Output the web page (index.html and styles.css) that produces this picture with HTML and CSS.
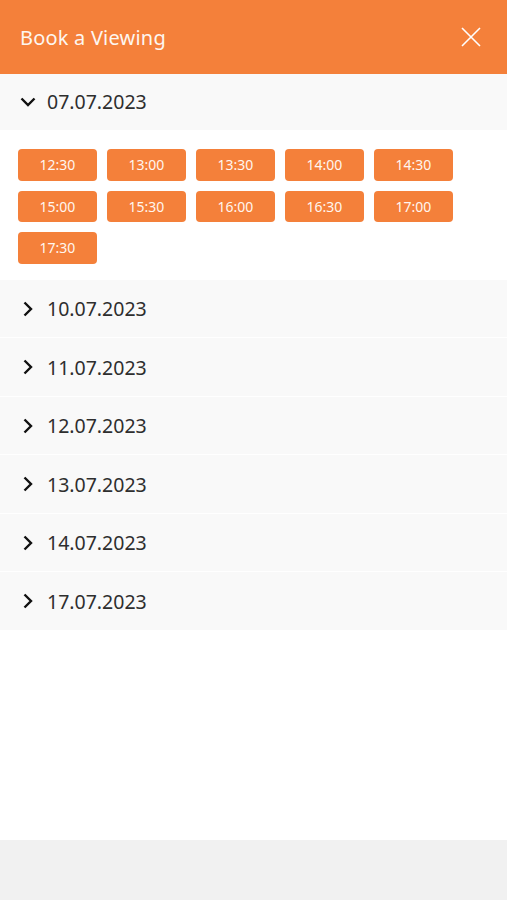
FILE: index.html
```html
<!DOCTYPE html>
<html lang="en">
<head>
<meta charset="utf-8">
<title>Book a Viewing</title>
<link rel="stylesheet" href="styles.css">
</head>
<body>
<div class="sheet">
  <header class="top">
    <h1 class="title">Book a Viewing</h1>
    <button class="close" aria-label="Close">
      <svg width="20" height="20" viewBox="0 0 20 20"><path d="M1 1 L19 19 M19 1 L1 19" stroke="#fff" stroke-width="1.6" fill="none"/></svg>
    </button>
  </header>
  <main class="list">
    <section class="day open">
      <div class="day-head">
        <svg class="chev" width="16" height="16" viewBox="0 0 16 16"><path d="M1.5 4.5 L8 11 L14.5 4.5" stroke="#111" stroke-width="2.4" fill="none"/></svg>
        <span class="date">07.07.2023</span>
      </div>
      <div class="slots">
        <button class="slot">12:30</button>
        <button class="slot">13:00</button>
        <button class="slot">13:30</button>
        <button class="slot">14:00</button>
        <button class="slot">14:30</button>
        <button class="slot">15:00</button>
        <button class="slot">15:30</button>
        <button class="slot">16:00</button>
        <button class="slot">16:30</button>
        <button class="slot">17:00</button>
        <button class="slot">17:30</button>
      </div>
    </section>
    <section class="day"><div class="day-head"><svg class="chev" width="16" height="16" viewBox="0 0 16 16"><path d="M4.5 1.5 L11 8 L4.5 14.5" stroke="#111" stroke-width="2.4" fill="none"/></svg><span class="date">10.07.2023</span></div></section>
    <section class="day"><div class="day-head"><svg class="chev" width="16" height="16" viewBox="0 0 16 16"><path d="M4.5 1.5 L11 8 L4.5 14.5" stroke="#111" stroke-width="2.4" fill="none"/></svg><span class="date">11.07.2023</span></div></section>
    <section class="day"><div class="day-head"><svg class="chev" width="16" height="16" viewBox="0 0 16 16"><path d="M4.5 1.5 L11 8 L4.5 14.5" stroke="#111" stroke-width="2.4" fill="none"/></svg><span class="date">12.07.2023</span></div></section>
    <section class="day"><div class="day-head"><svg class="chev" width="16" height="16" viewBox="0 0 16 16"><path d="M4.5 1.5 L11 8 L4.5 14.5" stroke="#111" stroke-width="2.4" fill="none"/></svg><span class="date">13.07.2023</span></div></section>
    <section class="day"><div class="day-head"><svg class="chev" width="16" height="16" viewBox="0 0 16 16"><path d="M4.5 1.5 L11 8 L4.5 14.5" stroke="#111" stroke-width="2.4" fill="none"/></svg><span class="date">14.07.2023</span></div></section>
    <section class="day"><div class="day-head"><svg class="chev" width="16" height="16" viewBox="0 0 16 16"><path d="M4.5 1.5 L11 8 L4.5 14.5" stroke="#111" stroke-width="2.4" fill="none"/></svg><span class="date">17.07.2023</span></div></section>
  </main>
  <footer class="foot"></footer>
</div>
</body>
</html>
```
FILE: styles.css
```css
* { box-sizing: border-box; }
html, body { margin: 0; padding: 0; }
body {
  font-family: "Noto Sans", "Open Sans", sans-serif;
  background: #fff;
  width: 507px;
  height: 900px;
}
.sheet {
  display: flex;
  flex-direction: column;
  height: 900px;
}
.top {
  height: 74px;
  background: #f4803a;
  display: flex;
  align-items: center;
  justify-content: space-between;
  padding: 0 26px 0 20px;
}
.title {
  margin: 0;
  font-size: 20px;
  font-weight: 400;
  color: #fdf6f0;
  letter-spacing: 0.2px;
}
.close {
  background: none;
  border: 0;
  padding: 0;
  width: 20px;
  height: 20px;
  display: flex;
}
.list {
  flex: 1;
  display: flex;
  flex-direction: column;
}
.day { border-bottom: 1px solid #fff; }
.day-head {
  height: 57.5px;
  background: #f9f9f9;
  display: flex;
  align-items: center;
  padding: 1px 0 0 20px;
  gap: 11px;
}
.open .day-head { height: 55.5px; padding-top: 0; }
.chev { flex: none; }
.date {
  font-size: 19.5px;
  color: #2e2e2e;
}
.slots {
  display: flex;
  flex-wrap: wrap;
  gap: 10px;
  padding: 19.5px 18px 15px;
  background: #fff;
}
.slot {
  width: 79px;
  height: 31.5px;
  border: 0;
  border-radius: 4px;
  background: #f4803a;
  color: #fff6ef;
  font-family: inherit;
  font-size: 14px;
  padding: 0;
}
.foot {
  height: 60px;
  background: #f1f1f1;
}
```
